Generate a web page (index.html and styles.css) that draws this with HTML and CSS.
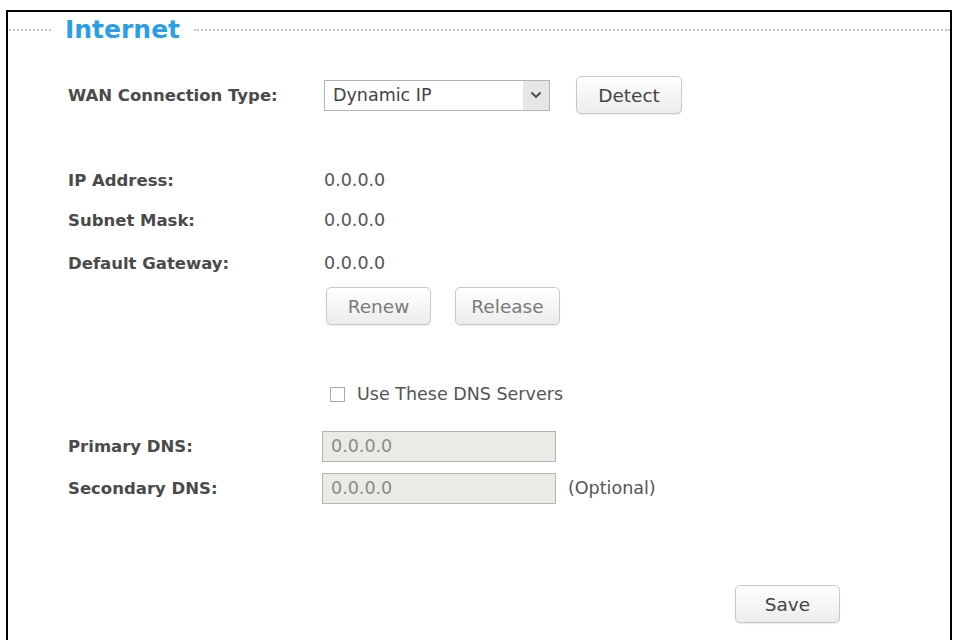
FILE: index.html
```html
<!DOCTYPE html>
<html>
<head>
<meta charset="utf-8">
<link rel="stylesheet" href="styles.css">
</head>
<body>
<div class="page">
  <div class="panel">
    <div class="legend">
      <span class="dots dots-left"></span>
      <span class="title">Internet</span>
      <span class="dots dots-right"></span>
    </div>

    <div class="row row-wan">
      <div class="label">WAN Connection Type:</div>
      <div class="value">
        <div class="select">
          <span class="select-text">Dynamic IP</span>
          <span class="select-arrow">
            <svg width="12" height="8" viewBox="0 0 12 8"><path d="M1.5 1.5 L6 6 L10.5 1.5" fill="none" stroke="#444" stroke-width="1.8"/></svg>
          </span>
        </div>
        <button class="btn btn-detect">Detect</button>
      </div>
    </div>

    <div class="row row-ip">
      <div class="label">IP Address:</div>
      <div class="value text">0.0.0.0</div>
    </div>
    <div class="row row-mask">
      <div class="label">Subnet Mask:</div>
      <div class="value text">0.0.0.0</div>
    </div>
    <div class="row row-gw">
      <div class="label">Default Gateway:</div>
      <div class="value text">0.0.0.0</div>
    </div>
    <div class="row row-btns">
      <div class="label"></div>
      <div class="value">
        <button class="btn btn-light btn-renew">Renew</button>
        <button class="btn btn-light btn-release">Release</button>
      </div>
    </div>

    <div class="row row-check">
      <div class="label"></div>
      <div class="value check-value">
        <span class="checkbox"></span>
        <span class="check-text">Use These DNS Servers</span>
      </div>
    </div>

    <div class="row row-dns1">
      <div class="label">Primary DNS:</div>
      <div class="value input-value">
        <div class="input">0.0.0.0</div>
      </div>
    </div>
    <div class="row row-dns2">
      <div class="label">Secondary DNS:</div>
      <div class="value input-value">
        <div class="input">0.0.0.0</div>
        <span class="optional">(Optional)</span>
      </div>
    </div>

    <div class="row row-save">
      <button class="btn btn-save">Save</button>
    </div>
  </div>
</div>
</body>
</html>
```

FILE: styles.css
```css
html, body {
  margin: 0;
  padding: 0;
  background: #ffffff;
}

.page {
  padding: 10px 2px 0 6px;
  height: 630px;
  overflow: hidden;
  font-family: "DejaVu Sans", Verdana, sans-serif;
}

.panel {
  border: 2px solid #000;
  border-bottom: none;
  height: 700px;
  box-sizing: border-box;
  padding-left: 60px;
}

.legend {
  display: flex;
  align-items: center;
  height: 36px;
  margin-left: -60px;
}

.dots {
  display: block;
  border-top: 2px dotted #c8c8c8;
  height: 0;
}

.dots-left {
  width: 42px;
  margin-left: 1px;
}

.dots-right {
  flex: 1;
}

.title {
  font-size: 25px;
  font-weight: bold;
  color: #2a9fe8;
  padding: 0 14px 0 14px;
  line-height: 36px;
}

.row {
  display: flex;
  align-items: center;
}

.label {
  width: 256px;
  flex: none;
  font-size: 16.5px;
  font-weight: bold;
  color: #4a4a4a;
}

.value {
  display: flex;
  align-items: center;
}

.text {
  font-size: 17.5px;
  color: #555;
}

.row-wan { height: 38px; margin-top: 28px; }
.row-ip { height: 30px; margin-top: 51px; }
.row-mask { height: 30px; margin-top: 10px; }
.row-gw { height: 30px; margin-top: 13px; }
.row-btns { height: 38px; margin-top: 9px; }
.row-check { height: 30px; margin-top: 54px; }
.row-dns1 { height: 30px; margin-top: 22px; }
.row-dns2 { height: 30px; margin-top: 12px; }
.row-save { height: 38px; margin-top: 82px; padding-left: 667px; }

.select {
  width: 226px;
  height: 31px;
  box-sizing: border-box;
  border: 1px solid #b4b4b4;
  display: flex;
  align-items: center;
  justify-content: space-between;
  background: #fff;
}

.select-text {
  font-size: 17.5px;
  color: #444;
  padding-left: 8px;
}

.select-arrow {
  width: 26px;
  height: 29px;
  background: #e6e6e6;
  display: flex;
  align-items: center;
  justify-content: center;
}

.btn {
  height: 38px;
  width: 106px;
  border: 1px solid #c8c8c8;
  border-radius: 5px;
  background: linear-gradient(#ffffff, #ececec);
  font-family: "DejaVu Sans", Verdana, sans-serif;
  font-size: 18.5px;
  color: #444;
  padding: 0;
  box-shadow: 0 1px 1px rgba(0,0,0,0.08);
}

.btn-detect {
  margin-left: 26px;
}

.btn-light {
  color: #7a7a7a;
  width: 105px;
}

.btn-renew {
  margin-left: 2px;
}

.btn-release {
  margin-left: 24px;
}

.check-value {
  padding-left: 6px;
}

.checkbox {
  display: block;
  box-sizing: border-box;
  width: 15px;
  height: 15px;
  border: 1px solid #a8a8a8;
  background: #fff;
}

.check-text {
  font-size: 17.5px;
  color: #555;
  margin-left: 12px;
}

.input-value {
  margin-left: -2px;
}

.input {
  width: 234px;
  height: 31px;
  box-sizing: border-box;
  border: 1px solid #b4b4b4;
  background: #ebebe6;
  font-size: 17.5px;
  color: #8a8a8a;
  padding-left: 8px;
  display: flex;
  align-items: center;
}

.optional {
  font-size: 17.5px;
  color: #555;
  margin-left: 12px;
}

.btn-save {
  width: 105px;
}
```
